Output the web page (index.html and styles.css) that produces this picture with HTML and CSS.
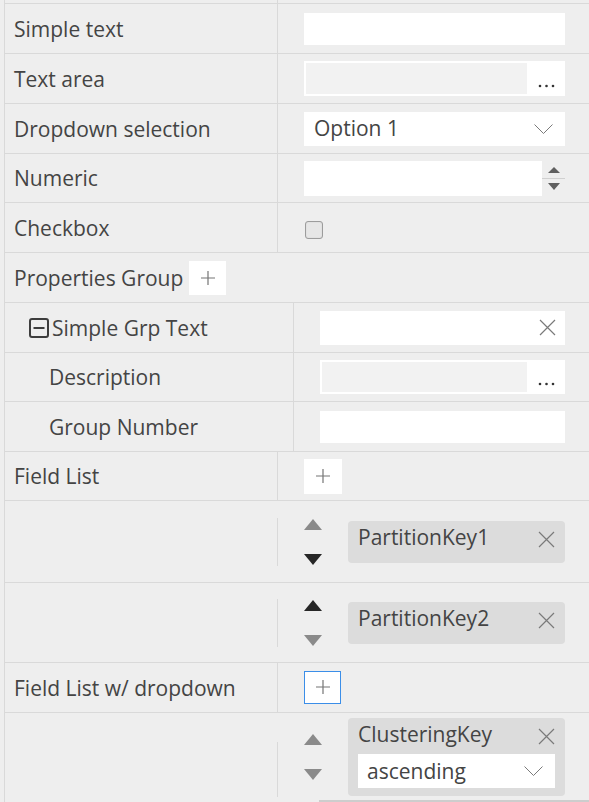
FILE: index.html
```html
<!DOCTYPE html>
<html>
<head>
<meta charset="utf-8">
<link rel="stylesheet" href="styles.css">
</head>
<body>
<div class="sheet">
  <div class="row stub"><div class="label"></div></div>

  <div class="row">
    <div class="label">Simple text</div>
    <div class="value"><div class="field h32"></div></div>
  </div>

  <div class="row">
    <div class="label">Text area</div>
    <div class="value">
      <div class="field ta">
        <div class="ta-body"></div>
        <div class="dots"><svg width="17" height="4" viewBox="0 0 17 4"><circle cx="2" cy="2" r="1.3"/><circle cx="8.5" cy="2" r="1.3"/><circle cx="15" cy="2" r="1.3"/></svg></div>
      </div>
    </div>
  </div>

  <div class="row">
    <div class="label">Dropdown selection</div>
    <div class="value">
      <div class="field select">
        <span class="sel-text">Option 1</span>
        <svg class="chev" width="19" height="10" viewBox="0 0 19 10"><path d="M0.5 0.5 L9.5 9.5 L18.5 0.5"/></svg>
      </div>
    </div>
  </div>

  <div class="row h49">
    <div class="label">Numeric</div>
    <div class="value">
      <div class="numeric">
        <div class="num-input"></div>
        <div class="spin">
          <svg width="12" height="6" viewBox="0 0 12 6"><polygon points="0,6 6,0 12,6"/></svg>
          <div class="spin-sep"></div>
          <svg width="12" height="7" viewBox="0 0 12 7"><polygon points="0,0 12,0 6,7"/></svg>
        </div>
      </div>
    </div>
  </div>

  <div class="row">
    <div class="label">Checkbox</div>
    <div class="value"><div class="checkbox"></div></div>
  </div>

  <div class="row">
    <div class="group-head">
      <span>Properties Group</span>
      <div class="add small">
        <svg width="16" height="16" viewBox="0 0 16 16"><path d="M8 1 V15 M1 8 H15"/></svg>
      </div>
    </div>
  </div>

  <div class="row">
    <div class="label wide indent1">
      <svg class="collapse" width="20" height="20" viewBox="0 0 20 20"><rect x="1" y="1" width="18" height="18" rx="2"/><path d="M4.5 10 H15.5"/></svg>
      <span>Simple Grp Text</span>
    </div>
    <div class="value">
      <div class="field h34 clear">
        <svg class="x" width="17" height="17" viewBox="0 0 17 17"><path d="M1 1 L16 16 M16 1 L1 16"/></svg>
      </div>
    </div>
  </div>

  <div class="row h49">
    <div class="label wide indent2">Description</div>
    <div class="value">
      <div class="field ta h34">
        <div class="ta-body"></div>
        <div class="dots"><svg width="17" height="4" viewBox="0 0 17 4"><circle cx="2" cy="2" r="1.3"/><circle cx="8.5" cy="2" r="1.3"/><circle cx="15" cy="2" r="1.3"/></svg></div>
      </div>
    </div>
  </div>

  <div class="row">
    <div class="label wide indent2">Group Number</div>
    <div class="value"><div class="field h32"></div></div>
  </div>

  <div class="row h49">
    <div class="label">Field List</div>
    <div class="value">
      <div class="add">
        <svg width="16" height="16" viewBox="0 0 16 16"><path d="M8 1 V15 M1 8 H15"/></svg>
      </div>
    </div>
  </div>

  <div class="row h82">
    <div class="label plain"></div>
    <div class="value list">
      <div class="vline"></div>
      <div class="mover">
        <svg class="tri light" width="18" height="11" viewBox="0 0 18 11"><polygon points="0,11 9,0 18,11"/></svg>
        <svg class="tri dark" width="18" height="11" viewBox="0 0 18 11"><polygon points="0,0 18,0 9,11"/></svg>
      </div>
      <div class="chip">
        <span class="chip-text">PartitionKey1</span>
        <svg class="x up" width="17" height="17" viewBox="0 0 17 17"><path d="M1 1 L16 16 M16 1 L1 16"/></svg>
      </div>
    </div>
  </div>

  <div class="row h80">
    <div class="label plain"></div>
    <div class="value list">
      <div class="vline"></div>
      <div class="mover">
        <svg class="tri dark" width="18" height="11" viewBox="0 0 18 11"><polygon points="0,11 9,0 18,11"/></svg>
        <svg class="tri light" width="18" height="11" viewBox="0 0 18 11"><polygon points="0,0 18,0 9,11"/></svg>
      </div>
      <div class="chip">
        <span class="chip-text">PartitionKey2</span>
        <svg class="x up" width="17" height="17" viewBox="0 0 17 17"><path d="M1 1 L16 16 M16 1 L1 16"/></svg>
      </div>
    </div>
  </div>

  <div class="row">
    <div class="label">Field List w/ dropdown</div>
    <div class="value">
      <div class="add focus">
        <svg width="16" height="16" viewBox="0 0 16 16"><path d="M8 1 V15 M1 8 H15"/></svg>
      </div>
    </div>
  </div>

  <div class="row h88">
    <div class="label plain"></div>
    <div class="value list">
      <div class="vline low"></div>
      <div class="mover">
        <svg class="tri light" width="18" height="11" viewBox="0 0 18 11"><polygon points="0,11 9,0 18,11"/></svg>
        <svg class="tri light" width="18" height="11" viewBox="0 0 18 11"><polygon points="0,0 18,0 9,11"/></svg>
      </div>
      <div class="chip tall">
        <div class="chip-head">
          <span class="head-text">ClusteringKey</span>
          <svg class="x" width="17" height="17" viewBox="0 0 17 17"><path d="M1 1 L16 16 M16 1 L1 16"/></svg>
        </div>
        <div class="field select inner">
          <span class="sel-text">ascending</span>
          <svg class="chev" width="19" height="10" viewBox="0 0 19 10"><path d="M0.5 0.5 L9.5 9.5 L18.5 0.5"/></svg>
        </div>
      </div>
    </div>
  </div>

  <div class="tail"></div>
</div>
</body>
</html>
```

FILE: styles.css
```css
* { box-sizing: border-box; }

html, body {
  margin: 0;
  padding: 0;
}

body {
  width: 589px;
  height: 802px;
  overflow: hidden;
  background: #eeeeee;
  font-family: "Open Sans", "DejaVu Sans", sans-serif;
  font-size: 21px;
  color: #444444;
}

.sheet {
  margin-left: 4px;
  border-left: 1px solid #d9d9d9;
  min-height: 802px;
}

.row {
  display: flex;
  height: 50px;
  border-top: 1px solid #d9d9d9;
}

.row.stub { height: 3px; border-top: 0; }
.row.h49 { height: 49px; }
.row.h80 { height: 80px; }
.row.h82 { height: 82px; }
.row.h88 { height: 88px; }

.label {
  flex: none;
  width: 273px;
  border-right: 1px solid #d9d9d9;
  display: flex;
  align-items: center;
  padding-left: 9px;
  white-space: nowrap;
}

.label.wide { width: 289px; }
.label.indent1 { padding-left: 24px; }
.label.indent2 { padding-left: 44px; }
.label.plain { width: 272px; border-right: 0; }

.collapse {
  flex: none;
  margin-right: 3px;
  fill: none;
  stroke: #3d3d3d;
  stroke-width: 2;
}

.value {
  flex: 1;
  display: flex;
  align-items: center;
  padding: 0 24px 0 26px;
  min-width: 0;
}

.field {
  flex: 1;
  height: 35px;
  background: #ffffff;
  display: flex;
  align-items: center;
}

.field.h32 { height: 32px; }
.field.h34 { height: 34px; }

.field.ta {
  padding: 2px 0 2px 2px;
  align-items: stretch;
}

.ta-body {
  flex: 1;
  background: #f2f2f2;
}

.dots {
  flex: none;
  width: 38px;
  display: flex;
  align-items: flex-end;
  justify-content: center;
  padding-bottom: 6px;
}

.dots svg { fill: #333333; }

.select {
  height: 34px;
  padding: 0 12px 0 10px;
  justify-content: space-between;
}

.sel-text { line-height: 1; }

.chev {
  fill: none;
  stroke: #7a7a7a;
  stroke-width: 1;
}

.numeric {
  flex: 1;
  display: flex;
  height: 35px;
}

.num-input {
  flex: 1;
  background: #ffffff;
}

.spin {
  flex: none;
  width: 23px;
  display: flex;
  flex-direction: column;
  align-items: center;
  justify-content: center;
}

.spin svg { fill: #5f5f5f; display: block; }

.spin-sep {
  width: 23px;
  height: 1px;
  background: #d0d0d0;
  margin: 5px 0 4px;
}

.checkbox {
  width: 18px;
  height: 18px;
  margin-top: 5px;
  margin-left: 1px;
  border: 1.5px solid #9c9c9c;
  border-radius: 3px;
  background: #e6e6e6;
  box-shadow: inset 0 0 1px #bbbbbb;
}

.group-head {
  display: flex;
  align-items: center;
  padding-left: 9px;
  gap: 6px;
}

.add {
  flex: none;
  width: 38px;
  height: 35px;
  background: #ffffff;
  display: flex;
  align-items: center;
  justify-content: center;
}

.add.small { width: 37px; height: 34px; }

.add.focus {
  width: 37px;
  height: 33px;
  margin-top: -1px;
  border: 1px solid #3b8ee8;
}

.add svg {
  fill: none;
  stroke: #757575;
  stroke-width: 1.2;
}

.clear { justify-content: flex-end; padding-right: 9px; }

.x {
  flex: none;
  fill: none;
  stroke: #7a7a7a;
  stroke-width: 1.2;
}

.x.up { margin-bottom: 4px; }

.value.list { padding-left: 0; }

.vline {
  flex: none;
  width: 1px;
  height: 48px;
  background: #d9d9d9;
  margin-right: 26px;
}

.vline.low {
  height: 55px;
  align-self: flex-end;
  margin-bottom: 3px;
}

.mover {
  flex: none;
  width: 18px;
  height: 46px;
  margin-right: 26px;
  display: flex;
  flex-direction: column;
  justify-content: space-between;
}

.tri { display: block; }
.tri.light { fill: #8a8a8a; }
.tri.dark { fill: #262626; }

.chip {
  flex: 1;
  height: 42px;
  background: #dcdcdc;
  border-radius: 4px;
  display: flex;
  align-items: center;
  justify-content: space-between;
  padding: 0 10px 0 10px;
  white-space: nowrap;
}

.chip-text { margin-bottom: 10px; }

.chip.tall {
  height: 78px;
  flex-direction: column;
  align-items: stretch;
  justify-content: flex-start;
  padding: 0 10px 8px 10px;
  margin-top: 1px;
}

.chip-head {
  height: 36px;
  display: flex;
  align-items: center;
  justify-content: space-between;
}

.head-text { margin-bottom: 4px; }

.field.inner {
  flex: none;
  height: 34px;
  padding: 0 12px 0 9px;
}

.tail {
  margin-left: 314px;
  height: 2px;
  background: #cdcdcd;
}
```
